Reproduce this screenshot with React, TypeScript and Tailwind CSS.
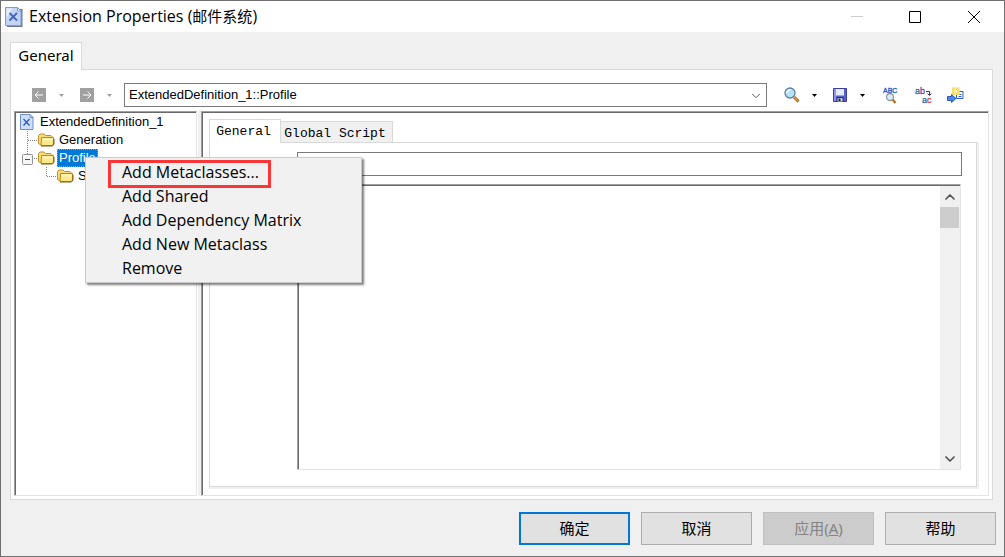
import React from "react";
import { ChevronDown, ChevronUp } from "lucide-react";

const menuItems = [
  "Add Metaclasses...",
  "Add Shared",
  "Add Dependency Matrix",
  "Add New Metaclass",
  "Remove",
];

function DocIcon() {
  return (
    <svg width="18" height="20" viewBox="0 0 18 20" className="shrink-0">
      <path d="M2 2h15.500v18H2z" fill="#6b7690" />
      <path d="M.5.5h12l3.500 3.500v14.500H.5z" fill="#c3d4f5" stroke="#7f9cd6" />
      <path d="M1.500 1.500h6L1.500 11z" fill="#e6effd" />
      <path d="M12.500.5V4H16z" fill="#fff" stroke="#7f9cd6" />
      <path d="M4.500 6l7.500 7.500M12 6l-7.500 7.500" stroke="#4565b8" strokeWidth="1.800" />
    </svg>
  );
}

function FolderIcon() {
  return (
    <svg width="17" height="14" viewBox="0 0 17 14" className="shrink-0">
      <path d="M.5 10.500V2.500L2 1h4l1.500 1.500h5.500l1 1v8H2z" fill="#f7dc7c" stroke="#c0922a" />
      <path d="M3.500 4.500h12V11L14 12.500H3z" fill="#fde88a" stroke="#b98a1c" />
      <path d="M4.500 5.500h10v2h-10z" fill="#fff6c4" />
      <path d="M3 13h11.500l1.500-2V6" fill="none" stroke="#7d5a12" />
    </svg>
  );
}

function Caret({ color }: { color: string }) {
  return (
    <svg width="5" height="3" viewBox="0 0 5 3">
      <path d="M0 0h5L2.500 3z" fill={color} />
    </svg>
  );
}

function ArrowIcon({ flip }: { flip?: boolean }) {
  return (
    <svg width="14" height="14" viewBox="0 0 14 14" className={flip ? "-scale-x-100" : ""}>
      <path d="M0 0h14v14H0z" fill="#a0a0a0" />
      <path d="M3 7h8M6.500 3.500L3 7l3.500 3.500" fill="none" stroke="#fff" />
    </svg>
  );
}

function FindIcon() {
  return (
    <svg width="16" height="16" viewBox="0 0 16 16">
      <path d="M10 10l4.500 4.500" stroke="#8a5a1c" strokeWidth="3" />
      <path d="M10 10l4 4" stroke="#e9a13b" strokeWidth="1.500" />
      <circle cx="6" cy="6" r="5" fill="#b9e2f7" stroke="#5c7fa3" strokeWidth="1.300" />
      <path d="M3 6a3 3 0 0 1 3-3" fill="none" stroke="#fff" strokeWidth="1.500" />
    </svg>
  );
}

function SaveIcon() {
  return (
    <svg width="14" height="14" viewBox="0 0 14 14">
      <path d="M.5.5h13v13H.5z" fill="#5a5fd0" stroke="#3a3da6" />
      <path d="M1 1h2v12H1z" fill="#8f93ea" />
      <path d="M3 1h8v6.500H3z" fill="#e4ebfc" />
      <path d="M3.500 9h7v4.500h-7z" fill="#2a2d66" />
      <path d="M4.500 10h5v3.500h-5z" fill="#c7d6dc" />
      <path d="M5.500 10.500h2v2.500h-2z" fill="#1d2a4a" />
    </svg>
  );
}

function SpellIcon() {
  return (
    <svg width="16" height="17" viewBox="0 0 16 17">
      <text x="0" y="6" fontSize="7" fill="#1f55c8" stroke="#1f55c8" strokeWidth=".3" fontFamily="Liberation Sans, sans-serif">
        ABC
      </text>
      <path d="M9.500 12.500l3 3.500" stroke="#b8741f" strokeWidth="2.500" />
      <circle cx="7" cy="10" r="3.500" fill="#dcebf5" stroke="#8b97a3" strokeWidth="1.300" />
    </svg>
  );
}

function ReplaceIcon() {
  return (
    <svg width="17" height="17" viewBox="0 0 17 17" fontFamily="Liberation Sans, sans-serif">
      <text x="0" y="7" fontSize="9" fill="#2f6a9d" stroke="#2f6a9d" strokeWidth=".3">a</text>
      <text x="5" y="7" fontSize="9" fill="#7440b0" stroke="#7440b0" strokeWidth=".3">b</text>
      <text x="7" y="16" fontSize="9" fill="#2f6a9d" stroke="#2f6a9d" strokeWidth=".3">a</text>
      <text x="12" y="16" fontSize="9" fill="#d84040" stroke="#d84040" strokeWidth=".3">c</text>
      <path d="M11 4.500h3.500V8M12.500 6.500l2 2 2-2" fill="none" stroke="#33336b" />
    </svg>
  );
}

function ImportIcon() {
  return (
    <svg width="17" height="17" viewBox="0 0 17 17">
      <path d="M9.500 4.500h6.500v7H9.500z" fill="#fff" stroke="#2a5cc8" />
      <path d="M11.500 7.500h3M11.500 9.500h3" stroke="#2a5cc8" />
      <path d="M5 .5h7.500V8H5z" fill="#f4d552" />
      <path d="M8.750.5V8M5 4.250h7.500M5.500 1l6.500 6.500M12 1L5.500 7.500" stroke="#fff8d0" strokeWidth=".8" />
      <path d="M.5 9.500h4V7.500l4.500 4-4.500 4v-2h-4z" fill="#4a86e8" stroke="#2a5cbf" />
    </svg>
  );
}

function Tree() {
  return (
    <ul role="tree" className="font-['Liberation_Sans',sans-serif] text-[13px] leading-[18px]">
      <li role="treeitem" className="flex h-[18px] items-center pl-1">
        <svg width="14" height="16" viewBox="0 0 14 16" className="mr-[6px] shrink-0">
          <path d="M.5.5h9.500l3 3v12H.5z" fill="#cfdffb" stroke="#6d8cd0" />
          <path d="M10 .5v3h3z" fill="#fff" stroke="#6d8cd0" />
          <path d="M3.500 5l6 6.500M9.500 5l-6 6.500" stroke="#2f57b8" strokeWidth="1.300" />
        </svg>
        ExtendedDefinition_1
      </li>
      <li role="treeitem" className="flex h-[18px] items-center">
        <svg width="22" height="18" viewBox="0 0 22 18" className="shrink-0">
          <path d="M11.500 0v18M12 9.500h10" stroke="#808080" strokeDasharray="1 1" />
        </svg>
        <FolderIcon />
        <span className="ml-[2px] px-[2px]">Generation</span>
      </li>
      <li role="treeitem" aria-selected="true" className="flex h-[18px] items-center">
        <svg width="22" height="18" viewBox="0 0 22 18" className="shrink-0">
          <path d="M11.500 0v5M18 9.500h4" stroke="#808080" strokeDasharray="1 1" />
          <rect x="6.500" y="5.500" width="10" height="10" rx="1" fill="#f6f6f6" stroke="#919191" />
          <path d="M9 10.500h5" stroke="#2c4a9c" />
        </svg>
        <FolderIcon />
        <span className="ml-[2px] border border-dotted border-[#ff8728] bg-[#0078d7] px-px leading-[16px] text-white">
          Profile
        </span>
      </li>
      <li role="treeitem" className="flex h-[18px] items-center pl-[19px]">
        <svg width="22" height="18" viewBox="0 0 22 18" className="shrink-0">
          <path d="M11.500 0v9M12 9.500h10" stroke="#808080" strokeDasharray="1 1" />
        </svg>
        <FolderIcon />
        <span className="ml-[2px] px-[2px]">Shared</span>
      </li>
    </ul>
  );
}

function ContextMenu() {
  return (
    <div
      role="menu"
      className="absolute top-[156px] left-[84px] w-[277px] border border-[#ccc] bg-[#f1f1f1] py-[2px] font-['Open_Sans',sans-serif] text-base leading-6 shadow-[2px_2px_2px_rgba(0,0,0,0.5)]"
    >
      {menuItems.map((item, i) => (
        <button key={item} role="menuitem" className="relative block h-6 w-full pl-9 text-left">
          {item}
          {i === 0 && <span className="absolute top-0 left-[22px] h-7 w-[163px] border-3 border-[#fb3637]" />}
        </button>
      ))}
    </div>
  );
}

const sunken =
  "border border-t-[#a0a0a0] border-l-[#a0a0a0] border-r-[#e3e3e3] border-b-[#e3e3e3] shadow-[inset_1px_1px_0_#696969]";
const footerButton = "h-[33px] w-[111px] border border-[#adadad] bg-[#e1e1e1] pb-px";

export default function App() {
  return (
    <div className="relative flex min-h-screen flex-col border border-[#707070] bg-[#f0f0f0] font-['Noto_Sans','Noto_Sans_CJK_SC',sans-serif] text-[15px] leading-6 text-black">
      <header className="flex h-[31px] items-center bg-white pl-1">
        <DocIcon />
        <h1 className="ml-[6px] flex-1 pb-px font-['Open_Sans','Noto_Sans_CJK_SC',sans-serif] text-base leading-6">
          Extension Properties (<span className="text-[15px]">邮件系统</span>)
        </h1>
        <button aria-label="Minimize" disabled className="flex h-full w-[58px] items-center justify-center">
          <svg width="12" height="12" viewBox="0 0 12 12"><path d="M0 5.500h12" stroke="#ccc" /></svg>
        </button>
        <button aria-label="Maximize" className="flex h-full w-[58px] items-center justify-center">
          <svg width="12" height="12" viewBox="0 0 12 12"><path d="M.5.5h11v11H.5z" fill="none" stroke="#000" /></svg>
        </button>
        <button aria-label="Close" className="flex h-full w-[60px] items-center justify-center">
          <svg width="12" height="12" viewBox="0 0 12 12"><path d="M0 0l12 12M12 0L0 12" stroke="#000" /></svg>
        </button>
      </header>

      <main className="flex flex-1 flex-col pt-[10px] pr-[11px] pl-[9px]">
        <div role="tablist" className="flex">
          <button role="tab" aria-selected="true" className="z-10 -mb-px h-7 w-[72px] border border-b-0 border-[#d9d9d9] bg-white pb-1">
            General
          </button>
        </div>
        <section className="flex flex-1 flex-col border border-[#d9d9d9] bg-white px-[3px] pt-[13px] pb-[3px]">
          <div className="flex h-6 items-center">
            <button aria-label="Back" className="ml-[18px]"><ArrowIcon /></button>
            <button aria-label="Back history" className="ml-[13px] flex"><Caret color="#a0a0a0" /></button>
            <button aria-label="Forward" className="ml-4"><ArrowIcon flip /></button>
            <button aria-label="Forward history" className="ml-[13px] flex"><Caret color="#a0a0a0" /></button>
            <div className="relative ml-3 h-6 flex-1">
              <select
                aria-label="Location"
                className="block h-6 w-full appearance-none border border-[#7a7a7a] bg-white pl-1 font-['Liberation_Sans',sans-serif] text-[13px] leading-5"
              >
                <option>ExtendedDefinition_1::Profile</option>
              </select>
              <ChevronDown size={14} strokeWidth={1.500} className="pointer-events-none absolute top-[6px] right-1 text-[#444]" />
            </div>
            <button aria-label="Find" className="ml-[17px]"><FindIcon /></button>
            <button aria-label="Find options" className="ml-3 flex"><Caret color="#000" /></button>
            <button aria-label="Save" className="ml-4"><SaveIcon /></button>
            <button aria-label="Save options" className="ml-[13px] flex"><Caret color="#000" /></button>
            <button aria-label="Spelling" className="ml-[18px]"><SpellIcon /></button>
            <button aria-label="Replace" className="ml-4"><ReplaceIcon /></button>
            <button aria-label="Import" className="mr-[25px] ml-[15px]"><ImportIcon /></button>
          </div>

          <div className="mt-1 flex flex-1">
            <nav className={`w-[183px] shrink-0 bg-white pt-px pl-px ${sunken}`}>
              <Tree />
            </nav>
            <div className="ml-px w-[3px] bg-[#f0f0f0]" />
            <div className={`flex flex-1 flex-col pt-[7px] pr-[7px] pb-2 pl-[7px] ${sunken}`}>
              <div role="tablist" className="flex items-end font-['Liberation_Mono',monospace] text-[13px]">
                <button role="tab" aria-selected="true" className="z-10 -mb-px h-6 w-[72px] border border-b-0 border-[#d9d9d9] bg-white pr-[3px]">
                  General
                </button>
                <button role="tab" className="h-[21px] w-[112px] border border-b-0 border-l-0 border-[#d9d9d9] bg-[#f0f0f0] pr-[3px]">
                  Global Script
                </button>
              </div>
              <div className="mr-1 flex flex-1 flex-col border border-[#d9d9d9] pt-[9px] pr-[14px] pb-4 pl-[87px] shadow-[1px_1px_0_1px_#f0f0f0]">
                <input aria-label="Name" className="h-6 w-full border border-[#7a7a7a] bg-white px-1" />
                <div className={`mt-2 mr-px flex flex-1 pt-px pl-px ${sunken}`}>
                  <textarea aria-label="Comment" className="flex-1 resize-none p-1 outline-none" />
                  <div className="flex w-5 flex-col bg-[#f0f0f0] text-[#505050]">
                    <button aria-label="Scroll up" className="flex h-[21px] items-center justify-center">
                      <ChevronUp size={16} strokeWidth={2.500} />
                    </button>
                    <div className="h-[21px] w-[19px] bg-[#cdcdcd]" />
                    <button aria-label="Scroll down" className="mt-auto flex h-[21px] items-center justify-center">
                      <ChevronDown size={16} strokeWidth={2.500} />
                    </button>
                  </div>
                </div>
              </div>
            </div>
          </div>
        </section>
      </main>

      <footer className="flex justify-end gap-[11px] pt-3 pr-2 pb-[11px]">
        <button className="h-[33px] w-[111px] border-2 border-[#0078d7] bg-[#e1e1e1] pb-px">确定</button>
        <button className={footerButton}>取消</button>
        <button disabled className="h-[33px] w-[111px] border border-[#bfbfbf] bg-[#ccc] pb-px text-[#838383]">
          应用(<u>A</u>)
        </button>
        <button className={footerButton}>帮助</button>
      </footer>

      <ContextMenu />
    </div>
  );
}
